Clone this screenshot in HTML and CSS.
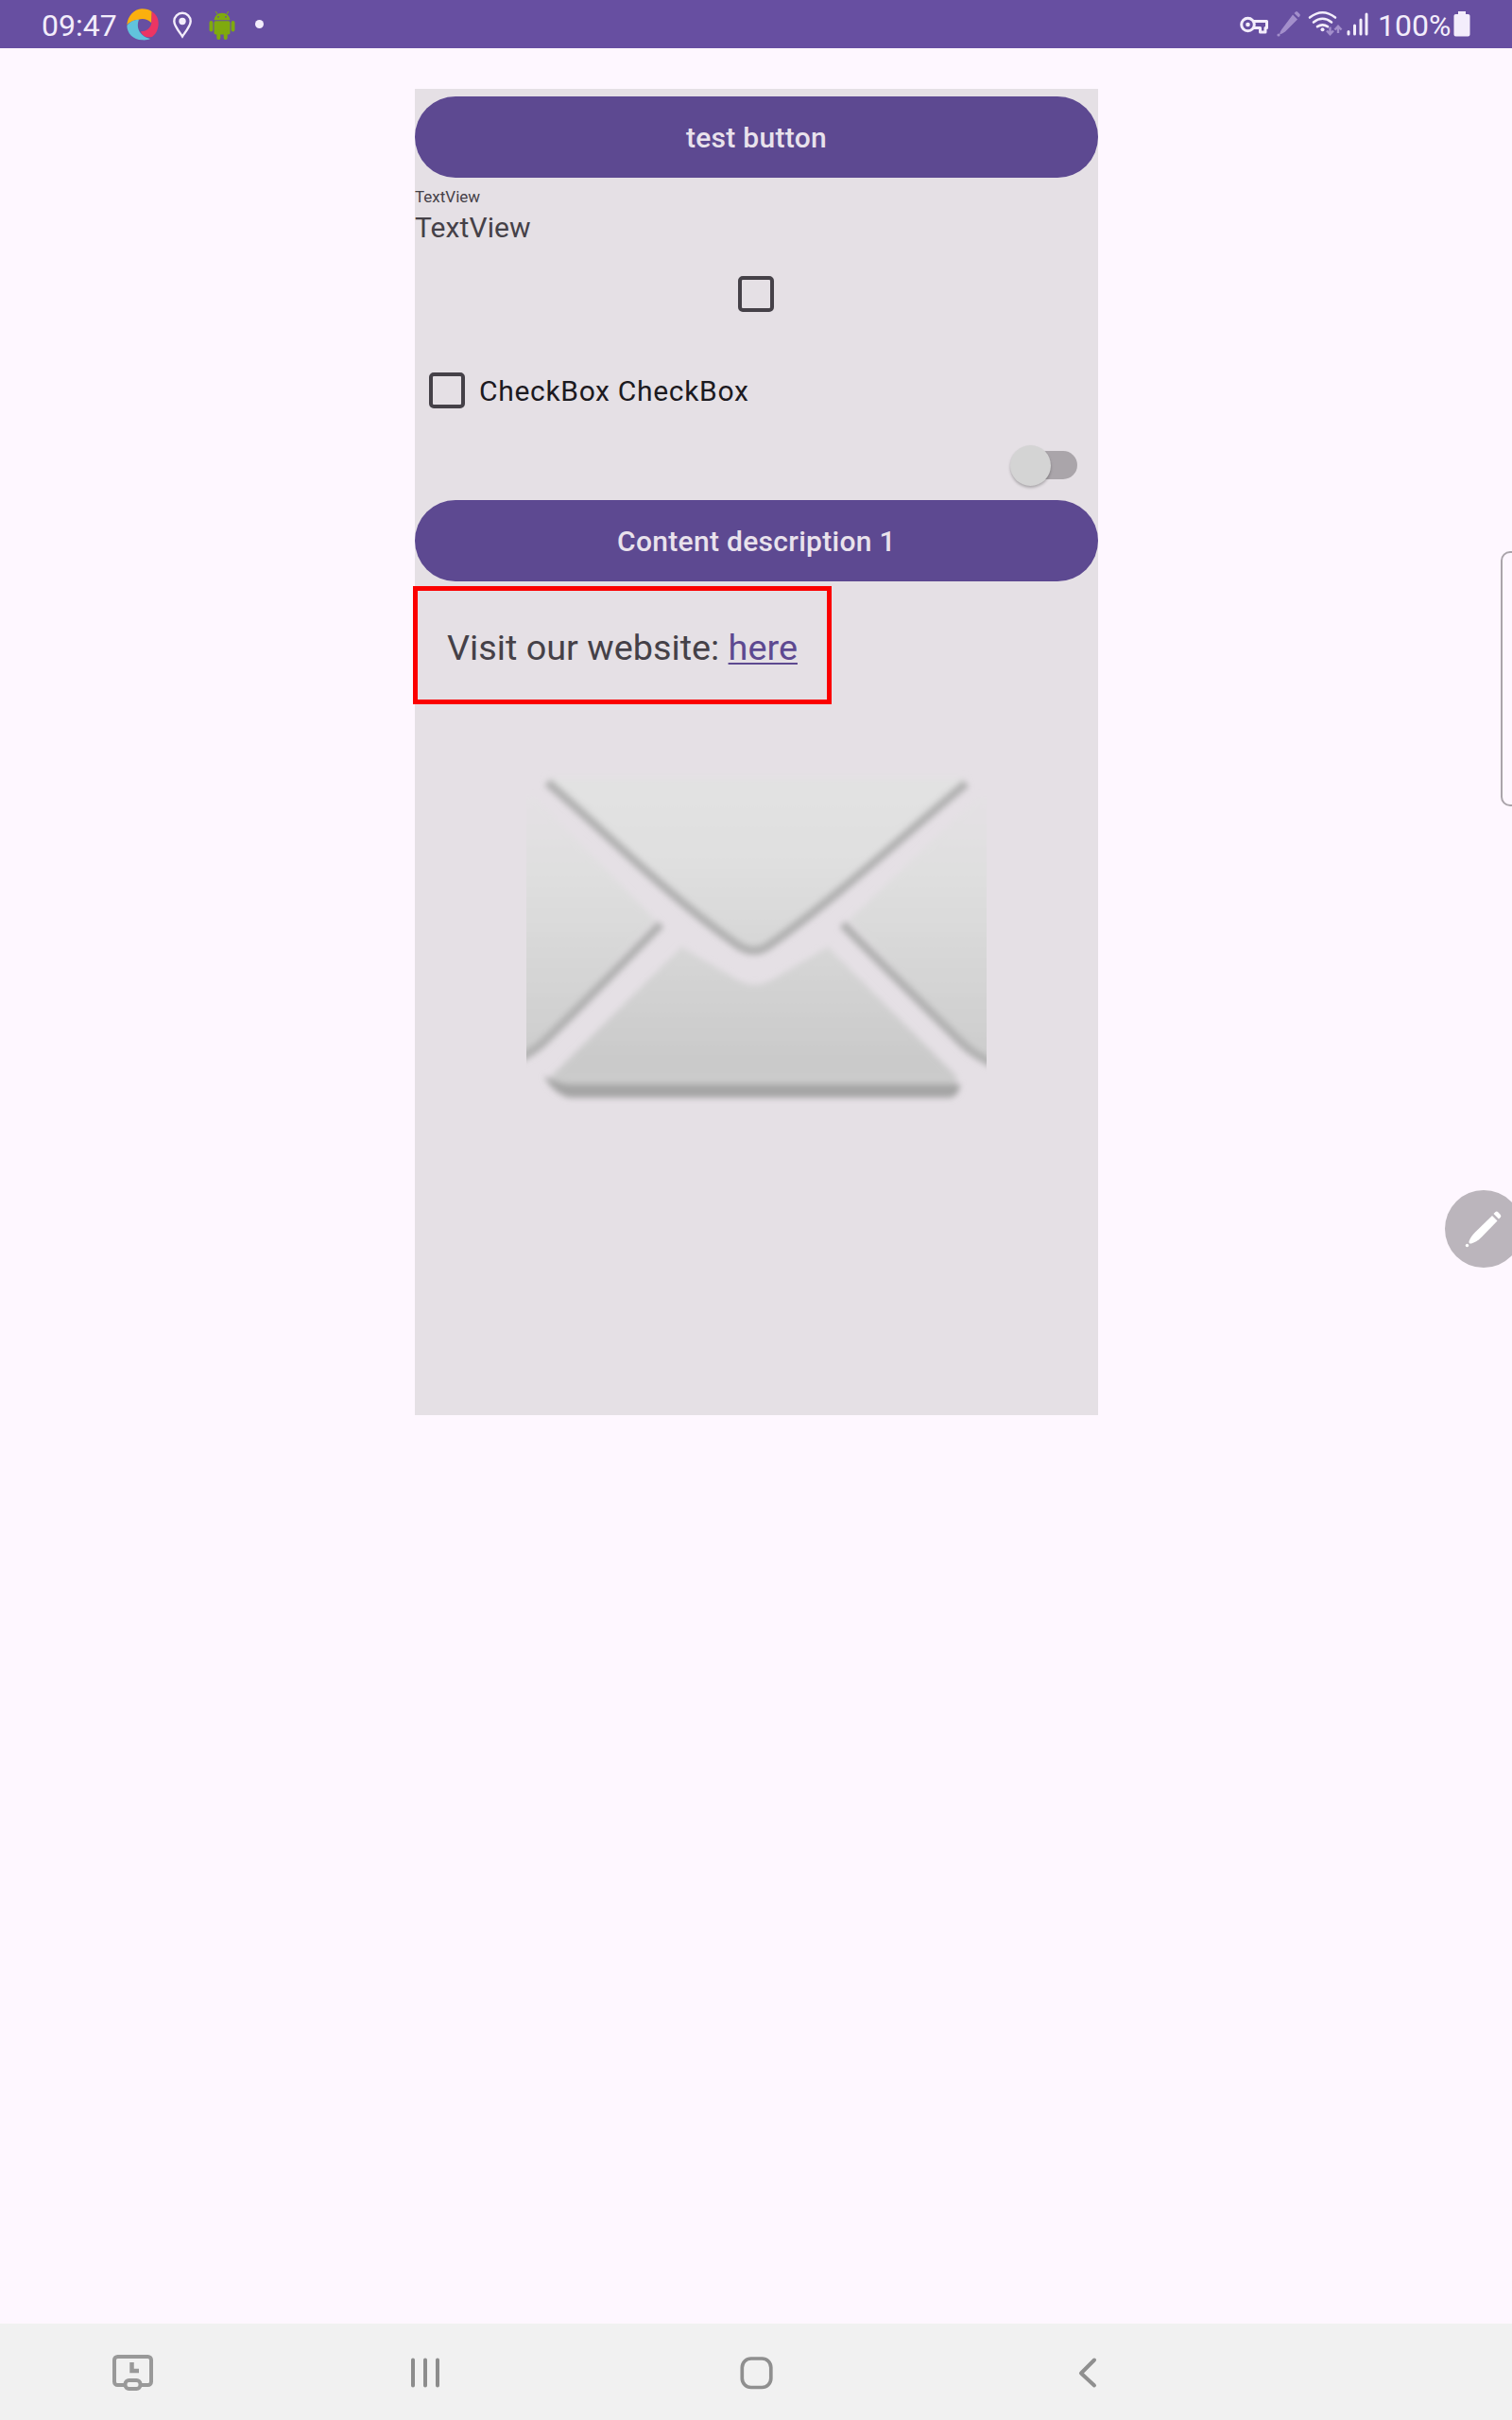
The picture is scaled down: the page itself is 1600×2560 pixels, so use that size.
FILE: index.html
```html
<!DOCTYPE html>
<html lang="en">
<head>
<meta charset="utf-8">
<title>Test screen</title>
<link rel="stylesheet" href="styles.css">
</head>
<body>
<header class="status">
  <span class="clock">09:47</span>
  <svg class="ic-app" width="36" height="36" viewBox="0 0 108 108">
    <path fill="#fbb00e" d="M4 55C6 28 26 5 51 4C65 4 77 8 83 13L82 49C68 35 52 34 39 39C24 40 12 46 4 55Z"/>
    <path fill="#ec3563" d="M83 13C99 22 105 38 104 54C102 72 96 84 84 93C66 97 52 90 48 76C64 76 80 66 82 49Z"/>
    <path fill="#61c3dc" d="M4 57C12 46 26 38 42 38C34 58 38 88 78 99C70 103 60 104 52 103C24 102 4 82 4 57Z"/>
  </svg>
  <svg class="ic-pin" width="22" height="30" viewBox="0 0 22 30">
    <path fill="none" stroke="#f3edfb" stroke-width="2.4" d="M11 26.500C8 22 2.300 15.500 2.300 10.500a8.700 8.700 0 0 1 17.400 0C19.700 15.500 14 22 11 26.500Z"/>
    <circle cx="11" cy="10.500" r="3.700" fill="#f3edfb"/>
  </svg>
  <svg class="ic-droid" width="28" height="32" viewBox="0 0 28 32">
    <g fill="#7faa0e">
      <path d="M5.500 10.200a8.500 7.500 0 0 1 17 0Z"/>
      <rect x="5.500" y="11.300" width="17" height="14.200" rx="1.800"/>
      <rect x=".5" y="11" width="3.900" height="11.500" rx="1.900"/>
      <rect x="23.600" y="11" width="3.900" height="11.500" rx="1.900"/>
      <rect x="8.300" y="20" width="4" height="11" rx="1.900"/>
      <rect x="15.700" y="20" width="4" height="11" rx="1.900"/>
      <path d="M9 4L7.300 1M19 4l1.700-3" stroke="#7faa0e" stroke-width="1"/>
    </g>
    <circle cx="10" cy="6.800" r=".9" fill="#674fa1"/><circle cx="18" cy="6.800" r=".9" fill="#674fa1"/>
  </svg>
  <span class="more"></span>
  <div class="system">
    <svg class="ic-signals" width="160" height="40" viewBox="0 0 160 40">
      <g fill="none" stroke="#f3edfb">
        <circle cx="9.500" cy="20" r="6.800" stroke-width="3"/>
        <path stroke-width="3" stroke-linejoin="round" d="M15 16.500H29.500V23.500H28V28H22.500V23.500H15"/>
      </g>
      <circle cx="9.500" cy="20" r="2.300" fill="#f3edfb"/>
      <g fill="#a38fcb">
        <path d="M57 9.500L62 14.500L49 27.500C47 29 44.500 30 43 30.500C43.500 28.500 44.500 25.500 46.500 23.500Z"/>
        <path d="M58.500 8l1.500-1.500q1-.8 2 0l2.500 2.500q.8 1 0 2L63.200 12.500Z"/>
        <circle cx="42" cy="31" r="1.600"/>
      </g>
      <g fill="none" stroke="#f3edfb" stroke-width="2.600" stroke-linecap="round">
        <path d="M75 12.500Q88.500 2 102 12.500M79 17.500Q88.500 10 98 17.500M83 22.200Q88.500 18.500 94 22.200"/>
      </g>
      <circle cx="88.500" cy="25.300" r="2" fill="#f3edfb"/>
      <path fill="none" stroke="#a38fcb" stroke-width="2.400" d="M96.500 22.500V30M93 26.500l3.500 3.800l3.500-3.800M105 29V21.500M101.500 25.500l3.500-3.800l3.500 3.800"/>
      <path fill="none" stroke="#f3edfb" stroke-width="3" stroke-linecap="round" d="M116 27.500V30M122.500 21V30M129 15V30M135 9V30"/>
    </svg>
    <span class="percent">100%</span>
    <svg class="ic-bat" width="18" height="27" viewBox="0 0 18 28" preserveAspectRatio="none"><path fill="#f3edfb" d="M5 0h8v3h2.500q2 0 2 2V25.500q0 2-2 2H2.500q-2 0-2-2V5q0-2 2-2H5Z"/></svg>
  </div>
</header>

<main class="screen">
  <section class="panel">
    <button class="btn">test button</button>
    <p class="small">TextView</p>
    <p class="body">TextView</p>
    <div class="check-alone"><span class="box"></span></div>
    <label class="check-row"><span class="box"></span><span>CheckBox CheckBox</span></label>
    <div class="switch-row"><span class="track"><span class="thumb"></span></span></div>
    <button class="btn">Content description 1</button>
    <div class="visit">Visit our website:&nbsp;<a class="link">here</a></div>
    <svg class="mail" width="487" height="400" viewBox="78 0 1415 1200" preserveAspectRatio="none">
      <defs>
        <linearGradient id="paper" gradientUnits="userSpaceOnUse" x1="0" y1="100" x2="0" y2="1100">
          <stop offset="0" stop-color="#e2e2e2"/><stop offset=".25" stop-color="#e0e0e0"/>
          <stop offset=".9" stop-color="#cacaca"/><stop offset="1" stop-color="#cccccc"/>
        </linearGradient>
        <linearGradient id="side" gradientUnits="userSpaceOnUse" x1="0" y1="160" x2="0" y2="980">
          <stop offset="0" stop-color="#e4e1e4"/><stop offset=".3" stop-color="#dfdfdf"/><stop offset="1" stop-color="#cdcdcd"/>
        </linearGradient>
        <filter id="soft" x="-10%" y="-10%" width="120%" height="120%"><feGaussianBlur stdDeviation="10"/></filter>
      </defs>
      <g filter="url(#soft)">
        <path fill="url(#paper)" d="M140 100H1430L830 625Q780 670 725 625Z"/>
        <path fill="url(#side)" d="M40 160H105L475 550L90 975L40 1000Z"/>
        <path fill="url(#side)" d="M1540 160H1465L1070 550L1440 960L1540 1020Z"/>
        <path fill="url(#paper)" d="M555 635L720 735Q780 775 840 735L1005 635L1400 1045V1080H150V1050Z"/>
        <g fill="none" stroke="#b1b1b1" stroke-width="27">
          <path d="M143 113C300 250 520 480 725 627Q780 668 832 624C1030 480 1250 270 1430 116"/>
          <path d="M491 563C370 690 240 830 125 943Q90 973 40 998M1051 563C1180 700 1310 830 1420 943Q1460 983 1540 1018"/>
        </g>
        <path fill="#a5a5a5" d="M132 1044Q180 1070 210 1070H1412Q1410 1107 1380 1114H210Q160 1100 132 1044Z"/>
      </g>
    </svg>
  </section>
  <div class="edge-handle"></div>
  <div class="fab">
    <svg width="82" height="82" viewBox="0 0 82 82" fill="#fff">
      <path d="M50 27L55.500 32.500L39 49.500C35 53.500 31 55.500 28 56.500Q25 57 25.500 54C27 50 29.500 47 32 44.500Z"/>
      <path d="M51.500 25l2-2q1.500-1 3 .5l2.300 2.500q1.200 1.500 0 2.800L57 30.500Z"/>
      <circle cx="23.500" cy="58.500" r="1.700"/>
    </svg>
  </div>
</main>

<nav class="nav">
  <svg width="44" height="40" viewBox="0 0 44 40">
    <rect x="3" y="3" width="39" height="30" rx="3.500" fill="none" stroke="#999" stroke-width="4"/>
    <path d="M21.500 9V18H29" fill="none" stroke="#999" stroke-width="4.500"/>
    <rect x="14.500" y="28" width="16" height="9" rx="4" fill="#f1f1f1" stroke="#999" stroke-width="4"/>
  </svg>
  <svg width="34" height="34" viewBox="0 0 34 34"><path d="M4 3.500V30.500M17 3.500V30.500M30 3.500V30.500" stroke="#8c8c8c" stroke-width="4" stroke-linecap="round"/></svg>
  <svg width="36" height="36" viewBox="0 0 36 36"><rect x="3.300" y="3" width="30.500" height="30.500" rx="9.500" fill="none" stroke="#8f8f8f" stroke-width="3.700"/></svg>
  <svg width="22" height="34" viewBox="0 0 22 34"><path d="M18 3.500L4 17.500L18 30.500" fill="none" stroke="#8f8f8f" stroke-width="4" stroke-linecap="round" stroke-linejoin="round"/></svg>
</nav>
</body>
</html>
```
FILE: styles.css
```css
* { box-sizing: border-box; }
body {
  margin: 0;
  width: 1600px;
  height: 2560px;
  display: flex;
  flex-direction: column;
  overflow: hidden;
  background: #fef7ff;
  font-family: Roboto, "Liberation Sans", sans-serif;
}
svg { display: block; flex: none; }
.status {
  height: 51px;
  padding: 0 43px 0 44px;
  display: flex;
  align-items: center;
  background: #674fa1;
  color: #f3edfb;
  font-size: 32px;
}
.clock, .percent { line-height: 38px; padding-top: 3px; }
.clock { width: 89px; }
.ic-pin { margin: 3px 0 0 13px; }
.ic-droid { margin: 2px 0 0 17px; }
.more { width: 9px; height: 9px; margin: 0 0 1px 21px; border-radius: 50%; background: #f3edfb; }
.system { width: 246px; margin-left: auto; display: flex; align-items: center; }
.ic-signals { margin-top: 1px; }
.percent { width: 77px; margin-left: -13px; }
.ic-bat { margin-left: 3px; }

.screen { flex: 1; position: relative; padding: 43px 0 0 439px; }
.panel {
  width: 723px;
  height: 1403px;
  padding-top: 8px;
  display: flex;
  flex-direction: column;
  background: #e5e0e5;
  color: #454148;
}
.btn {
  height: 86px;
  flex: none;
  padding: 2px 0 0;
  border: 0;
  border-radius: 43px;
  background: #5d4991;
  color: #e9e2ec;
  font: 500 30px/36px Roboto, "Liberation Sans", sans-serif;
  letter-spacing: .3px;
}
p { margin: 0; }
.small { margin-top: 10px; font-size: 17px; line-height: 20px; }
.body { font-size: 30px; line-height: 36px; margin-top: 5px; letter-spacing: .1px; }
.check-alone { height: 103px; padding-right: 1px; display: flex; justify-content: center; align-items: center; }
.box { width: 38px; height: 38px; border: 4px solid #454148; border-radius: 5px; }
.check-row {
  height: 102px;
  padding-left: 15px;
  display: flex;
  align-items: center;
  gap: 15px;
  color: #1c1a1f;
  font-size: 30px;
  letter-spacing: .68px;
}
.switch-row { height: 65px; padding: 13px 22px 0 0; display: flex; justify-content: flex-end; }
.track {
  width: 65px;
  height: 30px;
  border-radius: 15px;
  display: flex;
  align-items: center;
  background: #aaa5aa;
}
.thumb {
  width: 43px;
  height: 43px;
  flex: none;
  margin-left: -6px;
  border-radius: 50%;
  background: #d4d4d4;
  box-shadow: 0 2px 3px rgba(0, 0, 0, .25);
}
.visit {
  width: 443px;
  height: 125px;
  flex: none;
  margin: 5px 0 1px -2px;
  padding: 5px 0 0 31px;
  display: flex;
  align-items: center;
  border: 5px solid #fb0000;
  font-size: 37.8px;
}
.link {
  color: #5d4991;
  text-decoration: underline;
  text-decoration-thickness: 2px;
  text-underline-offset: 3px;
}
.mail { align-self: center; margin-top: 44px; }
.edge-handle {
  position: absolute;
  top: 532px;
  right: -10px;
  width: 22px;
  height: 270px;
  border: 2px solid #aaa4aa;
  border-radius: 10px;
}
.fab {
  position: absolute;
  top: 1208px;
  right: -11px;
  width: 82px;
  height: 82px;
  border-radius: 50%;
  background: #bbb5bc;
}
.nav {
  height: 102px;
  padding-top: 2px;
  display: grid;
  grid-template-columns: 280px 339px 361px 341px;
  place-items: center;
  background: #f1f1f1;
}
```
